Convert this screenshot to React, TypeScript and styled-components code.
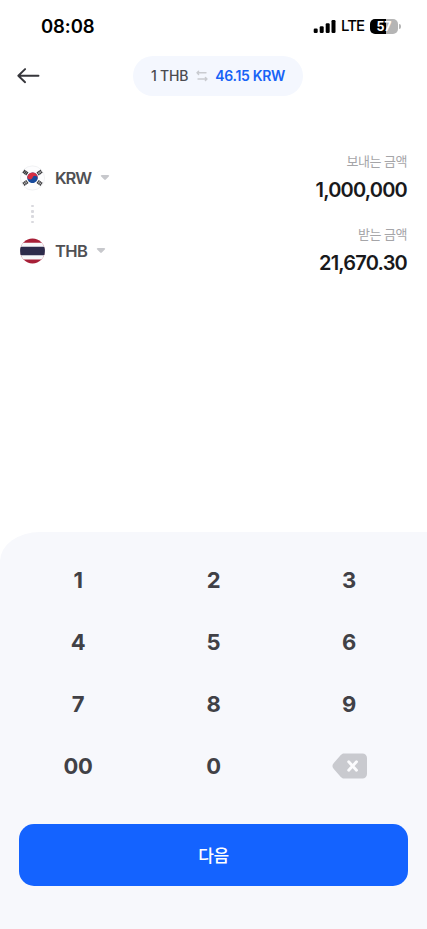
import React from 'react';
import styled, { createGlobalStyle } from 'styled-components';

const GlobalStyle = createGlobalStyle`
  * { box-sizing: border-box; }
  body { margin: 0; background: #fff; font-family: Inter, 'Noto Sans CJK KR', sans-serif; }
  button { font: inherit; border: 0; padding: 0; background: none; color: inherit; }
  svg { display: block; flex: none; }
`;

const Screen = styled.div`
  display: flex;
  flex-direction: column;
  width: 427px;
  height: 929px;
  background: #fff;
  overflow: hidden;
`;

const StatusBar = styled.header`
  display: flex;
  align-items: center;
  justify-content: space-between;
  height: 52px;
  padding: 0 26px 0 41px;
  color: #000;
`;

const Clock = styled.span`
  font-size: 18.5px;
  font-weight: 600;
  line-height: 24px;
  letter-spacing: -0.1px;
`;

const Indicators = styled.div`
  display: flex;
  align-items: center;
`;

const Network = styled.span`
  width: 23px;
  margin: 0 6px 0 5px;
  font-size: 15px;
  font-weight: 500;
  line-height: 20px;
  letter-spacing: -0.9px;
`;

const Battery = styled.span`
  display: flex;
  align-items: center;
  justify-content: center;
  width: 28px;
  height: 15px;
  border-radius: 5px;
  background: linear-gradient(90deg, #000 57%, #b5b5b5 57%);
  color: #fff;
  font-size: 12.5px;
  font-weight: 700;
  line-height: 15px;
  letter-spacing: -0.2px;
`;

const BatteryTip = styled.span`
  width: 2px;
  height: 5px;
  margin-left: 1px;
  border-radius: 0 2px 2px 0;
  background: #b5b5b5;
`;

const NavBar = styled.nav`
  display: flex;
  align-items: center;
  height: 48px;
  padding-left: 16px;
`;

const BackButton = styled.button`
  width: 25px;
`;

const RatePill = styled.div`
  display: flex;
  align-items: center;
  justify-content: center;
  width: 170px;
  height: 40px;
  margin-left: 92px;
  border-radius: 20px;
  background: #f4f7fe;
`;

const Rate = styled.span<{ $accent?: boolean }>`
  color: ${(p) => (p.$accent ? '#1763f6' : '#4b4b50')};
  font-size: 14px;
  font-weight: ${(p) => (p.$accent ? 600 : 550)};
  line-height: 20px;
  letter-spacing: ${(p) => (p.$accent ? '-0.3px' : '-0.2px')};
  white-space: nowrap;
`;

const SwapSlot = styled.span`
  margin: 0 7px 0 8px;
`;

const Exchange = styled.main`
  display: flex;
  flex-direction: column;
  flex: 1;
  padding: 51px 20px 0 20px;
`;

const CurrencyRow = styled.section`
  display: flex;
  justify-content: space-between;
  height: 53px;
`;

const Currency = styled.div`
  display: flex;
  align-items: center;
  height: 53px;
  color: #505054;
`;

const Code = styled.span<{ $width: number }>`
  width: ${(p) => p.$width}px;
  margin: 0 9px 0 10px;
  font-size: 16.5px;
  font-weight: 560;
  line-height: 24px;
  letter-spacing: ${(p) => (p.$width > 34 ? '-1px' : '-0.6px')};
`;

const Amounts = styled.div`
  display: flex;
  flex-direction: column;
  align-items: flex-end;
`;

const Caption = styled.span`
  color: #a5a5a8;
  font-size: 13px;
  line-height: 20px;
  letter-spacing: -0.5px;
`;

const Value = styled.span`
  margin-top: 6px;
  color: #19191b;
  font-size: 20px;
  font-weight: 600;
  line-height: 26px;
  letter-spacing: -0.8px;
`;

const Connector = styled.div`
  display: flex;
  flex-direction: column;
  justify-content: space-between;
  width: 25px;
  height: 20px;
  padding: 1px 0 1px 11px;
`;

const Dot = styled.i<{ $end?: boolean }>`
  width: 3px;
  height: ${(p) => (p.$end ? 2 : 3)}px;
  border-radius: 1px;
  background: #d9d9de;
`;

const Panel = styled.footer`
  display: flex;
  flex-direction: column;
  height: 397.5px;
  padding-top: 17px;
  border-radius: 40px 0 0 0 / 29px 0 0 0;
  background: #f7f8fc;
`;

const Keypad = styled.div`
  display: grid;
  grid-template-columns: repeat(3, 135.5px);
  grid-auto-rows: 62.2px;
  justify-content: center;
`;

const Key = styled.button`
  display: flex;
  align-items: center;
  justify-content: center;
  color: #414146;
  font-size: 22px;
  font-weight: 650;
  line-height: 28px;
  letter-spacing: -0.3px;
`;

const BackspaceSlot = styled.span`
  margin-left: 1px;
`;

const NextButton = styled.button`
  width: 388.5px;
  height: 62px;
  margin: 27.1px 0 0 19.25px;
  padding-bottom: 2px;
  border-radius: 15px;
  background: #1463ff;
  color: #fff;
  font-size: 17px;
  font-weight: 500;
  letter-spacing: -0.5px;
`;

const Signal = () => (
  <svg width="23" height="15" viewBox="0 0 23 15">
    <rect x="0.7" y="9.5" width="4" height="4.5" rx="1.2" />
    <rect x="6.7" y="7.3" width="4" height="6.7" rx="1.2" />
    <rect x="12.7" y="4.3" width="4" height="9.7" rx="1.2" />
    <rect x="18.5" y="1" width="4" height="13" rx="1.2" />
  </svg>
);

const BackArrow = () => (
  <svg width="25" height="18" viewBox="0 0 25 18" fill="none" stroke="#36363b" strokeWidth="1.9" strokeLinecap="round" strokeLinejoin="round">
    <path d="M22.5 8.8H2.3M9.1 2.1 2.3 8.8l6.8 6.4" />
  </svg>
);

const Swap = () => (
  <svg width="12" height="12" viewBox="0 0 12 12" fill="none" stroke="#c9cbd0" strokeWidth="1.4" strokeLinecap="round" strokeLinejoin="round">
    <path d="M10 2.8H1m1.6-1.6L1 2.8l1.6 1.6M2 9h9M9.4 7.4 11 9l-1.6 1.6" />
  </svg>
);

const Chevron = () => (
  <svg width="10" height="7" viewBox="0 0 10 7">
    <path d="M2 1h6c1.2 0 1.6.9.8 1.6L5.8 5.5c-.5.5-1.1.5-1.6 0l-3-2.9C.4 1.9.8 1 2 1Z" fill="#c7c8cc" />
  </svg>
);

const KoreaFlag = () => (
  <svg width="25" height="26" viewBox="0 0 25 26">
    <circle cx="12.5" cy="13" r="12.1" fill="#fdfdfe" stroke="#ebecef" strokeWidth=".7" />
    <g transform="rotate(20 12.5 12.7)">
      <circle cx="12.5" cy="12.7" r="5.3" fill="#174a9c" />
      <path d="M7.2 12.7a5.3 5.3 0 0 1 10.6 0 2.65 2.65 0 0 0-5.3 0 2.65 2.65 0 0 1-5.3 0Z" fill="#d72e43" />
    </g>
    <g stroke="#3a3a3d" strokeWidth="1.4">
      <path d="m2.9 8.1 2.2-3.1m-.8 4.1 2.2-3.1m-.8 4.1 2.2-3.1" />
      <path d="m22.1 8.1-2.2-3.1m.8 4.1-2.2-3.1m.8 4.1-2.2-3.1" />
      <path d="m2.9 17.4 2.2 3.1m-.8-4.1 2.2 3.1m-.8-4.1 2.2 3.1" />
      <path d="m22.1 17.4-2.2 3.1m.8-4.1-2.2 3.1m.8-4.1-2.2 3.1" />
    </g>
    <g stroke="#fdfdfe" strokeWidth=".5">
      <path d="m18 8.7 3.6-2.5M3.4 19.4 7 16.9m11 0 3.6 2.5" />
    </g>
  </svg>
);

const ThaiFlag = () => (
  <svg width="25" height="26" viewBox="0 0 25 26">
    <clipPath id="thai-disc"><circle cx="12.5" cy="13" r="12.4" /></clipPath>
    <g clipPath="url(#thai-disc)">
      <path fill="#a71f37" d="M0 0h25v26H0z" />
      <path fill="#f7f7fa" d="M0 4.7h25v16.7H0z" />
      <path fill="#2d2b4b" d="M0 8.7h25v8.6H0z" />
    </g>
  </svg>
);

const Backspace = () => (
  <svg width="36" height="26" viewBox="0 0 36 26">
    <path d="M12 .5h18.5a4.5 4.5 0 0 1 4.5 4.5v16a4.5 4.5 0 0 1-4.5 4.5H12c-1.4 0-2.3-.6-3.2-1.5L1.8 16.1c-1.8-2-1.8-4.2 0-6.2l7-7.9C9.7 1.1 10.6.5 12 .5Z" fill="#c9cacf" />
    <path d="m16.7 8.8 7.8 8.4m0-8.4-7.8 8.4" stroke="#fbfbfd" strokeWidth="2.9" strokeLinecap="round" />
  </svg>
);

const KEYS = ['1', '2', '3', '4', '5', '6', '7', '8', '9', '00', '0', 'delete'];

export default function App() {
  return (
    <Screen>
      <GlobalStyle />
      <StatusBar>
        <Clock>08:08</Clock>
        <Indicators>
          <Signal />
          <Network>LTE</Network>
          <Battery>57</Battery>
          <BatteryTip />
        </Indicators>
      </StatusBar>
      <NavBar>
        <BackButton aria-label="뒤로"><BackArrow /></BackButton>
        <RatePill>
          <Rate>1 THB</Rate>
          <SwapSlot><Swap /></SwapSlot>
          <Rate $accent>46.15 KRW</Rate>
        </RatePill>
      </NavBar>
      <Exchange>
        <CurrencyRow>
          <Currency><KoreaFlag /><Code $width={36}>KRW</Code><Chevron /></Currency>
          <Amounts><Caption>보내는 금액</Caption><Value>1,000,000</Value></Amounts>
        </CurrencyRow>
        <Connector><Dot $end /><Dot /><Dot /><Dot $end /></Connector>
        <CurrencyRow>
          <Currency><ThaiFlag /><Code $width={32}>THB</Code><Chevron /></Currency>
          <Amounts><Caption>받는 금액</Caption><Value>21,670.30</Value></Amounts>
        </CurrencyRow>
      </Exchange>
      <Panel>
        <Keypad>
          {KEYS.map((k) => (
            <Key key={k} aria-label={k === 'delete' ? '지우기' : undefined}>
              {k === 'delete' ? <BackspaceSlot><Backspace /></BackspaceSlot> : k}
            </Key>
          ))}
        </Keypad>
        <NextButton>다음</NextButton>
      </Panel>
    </Screen>
  );
}
